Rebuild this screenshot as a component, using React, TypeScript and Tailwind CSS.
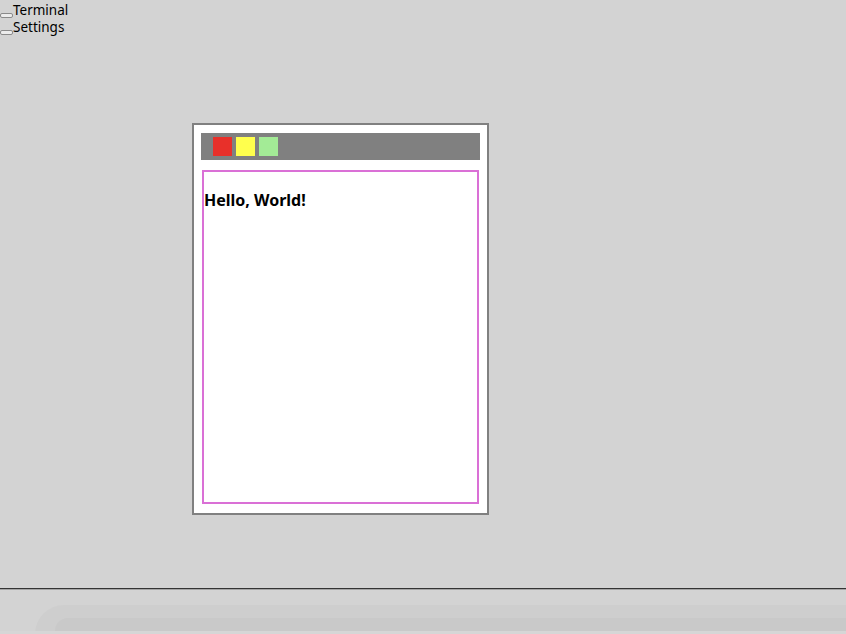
import React from 'react';

const apps = ['Terminal', 'Settings'];

const App = () => {
    return (
        <div className="h-[634px] w-full flex flex-col bg-[#d3d3d3] overflow-hidden" style={{ fontFamily: '"Noto Sans", "Open Sans", sans-serif' }}>
            {/* desktop */}
            <div className="relative flex-1">
                <div className="flex flex-col pt-[2px]">
                    {apps.map((name) => (
                        <div key={name} className="flex items-end h-[17px] text-[13.5px] leading-[17px] text-black">
                            <span className="inline-block shrink-0 w-[13px] h-[5px] mb-[1px] border border-[#8a8a8a] rounded-[2px] bg-[#ececec]" />
                            <span>{name}</span>
                        </div>
                    ))}
                </div>

                {/* window */}
                <div className="absolute left-[192px] top-[123px] w-[297px] h-[392px] border-2 border-[#808080] bg-white px-[7px] pt-[8px] pb-[9px] flex flex-col">
                    <div className="h-[27px] bg-[#808080] flex items-center gap-[4px] pl-[12px]">
                        <div className="w-[19px] h-[19px] bg-[#e8302a]" />
                        <div className="w-[19px] h-[19px] bg-[#ffff4d]" />
                        <div className="w-[19px] h-[19px] bg-[#a3eb96]" />
                    </div>
                    <div className="flex-1 mt-[10px] mx-[1px] border-2 border-[#da70d6] pt-[16px]">
                        <h1 className="text-[16px] font-bold leading-[24px] text-black">Hello, World!</h1>
                    </div>
                </div>
            </div>

            {/* taskbar */}
            <div className="h-[46px] border-t border-[#333333] relative">
                <div className="h-[1px] bg-[#a4a4a4]" />
                <div className="absolute left-[35px] right-0 top-[16px] bottom-0 rounded-tl-[60px] bg-[#cecece]">
                    <div className="absolute left-[20px] right-0 top-[13px] bottom-[3px] rounded-tl-[50px] bg-[#c9c9c9]" />
                </div>
                <div className="absolute left-0 right-0 bottom-0 h-[3px] bg-[#d6d6d6]" />
            </div>
        </div>
    );
};

export default App;
